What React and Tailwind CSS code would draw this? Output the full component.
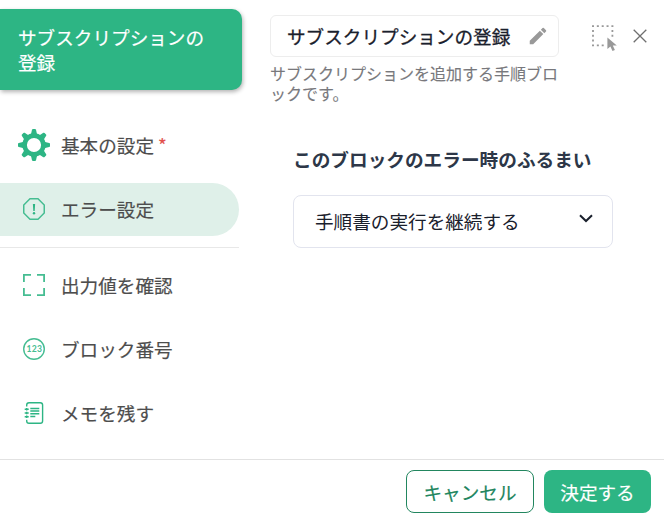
import React, { useState } from 'react';
import clsx from 'clsx';

const GearIcon = () => (
  <svg width="32" height="32" viewBox="0 0 32 32" fill="#2db584">
    {[0, 45, 90, 135, 180, 225, 270, 315].map((angle) => (
      <path key={angle} d="M12.8 6 14 .8Q14.2 0 15 0h2Q17.8 0 18 .8L19.2 6z" transform={`rotate(${angle} 16 16)`} />
    ))}
    <circle cx="16" cy="16" r="9.4" fill="none" stroke="#2db584" strokeWidth="4.6" />
  </svg>
);

const ErrorIcon = () => (
  <svg width="22" height="22" viewBox="0 0 22 22" fill="none" stroke="#46bd92" strokeWidth="1.5">
    <path d="M7 .75h8L21.25 7v8L15 21.25H7L.75 15V7z" />
    <path d="M9.9 6h2.2l-.4 7h-1.4z" fill="#2db584" stroke="none" />
    <circle cx="11" cy="15.2" r="1.2" fill="#2db584" stroke="none" />
  </svg>
);

const OutputIcon = () => (
  <svg width="22" height="22" viewBox="0 0 22 22" fill="none" stroke="#46bd92" strokeWidth="1.8">
    <path d="M.9 8V.9H8M14 .9h7.1V8M21.1 14v7.1H14M8 21.1H.9V14" />
  </svg>
);

const NumberIcon = () => (
  <svg width="22" height="22" viewBox="0 0 22 22">
    <circle cx="11" cy="11" r="10.3" fill="none" stroke="#46bd92" strokeWidth="1.4" />
    <text x="11.3" y="14" textAnchor="middle" className="font-['Lato',sans-serif] text-[8.6px] font-bold tracking-[0.2px] [-webkit-text-stroke:0]" fill="#46bd92">
      123
    </text>
  </svg>
);

const MemoIcon = () => (
  <svg width="22" height="22" viewBox="0 0 22 22" fill="none" stroke="#2db584" strokeWidth="1.4">
    <path d="M3.7 4.5V3Q3.7.7 6 .7h11.3q2.3 0 2.3 2.3v16q0 2.3-2.3 2.3H6Q3.7 21.3 3.7 19v-1.2" />
    <path d="M1.7 7.3h4M1.7 11h4M1.7 14.7h4M3.7 6v2.6M3.7 9.7v2.6M3.7 13.4V16" />
    <path d="M7.3 6.5h9M7.3 9h9M7.3 11.7h9M7.3 14.5h5" />
  </svg>
);

const PencilIcon = () => (
  <svg width="22" height="22" viewBox="0 0 24 24" fill="#999">
    <path d="M3 17.25V21h3.75L17.81 9.94l-3.75-3.75L3 17.25zM20.71 7.04a1 1 0 0 0 0-1.41l-2.34-2.34a1 1 0 0 0-1.41 0l-1.83 1.83 3.75 3.75 1.83-1.83z" />
  </svg>
);

const SelectAreaIcon = () => (
  <svg width="26" height="28" viewBox="0 0 26 28" fill="none" stroke="#999" strokeWidth="1.8">
    <path d="M0 1.2h21.4M0 20.3h14" strokeDasharray="2 2.85" />
    <path d="M1 4.9v14M20.4 4.9v9" strokeDasharray="2 2.75" />
    <path d="M15.4 12.5v11.6l3-2.7 2.1 4.6 2.4-1-2.1-4.4h4z" fill="#999" stroke="none" />
  </svg>
);

const CloseIcon = () => (
  <svg width="14" height="14" viewBox="0 0 14 14" fill="none" stroke="#6f6f6f" strokeWidth="1.3">
    <path d="M.7.7l12.6 12.6M13.3.7.7 13.3" />
  </svg>
);

const ChevronIcon = () => (
  <svg width="14" height="9" viewBox="0 0 14 9" fill="none" stroke="#1a202c" strokeWidth="2">
    <path d="M1 1.2l6 5.8 6-5.8" />
  </svg>
);

const settingTabs = [
  { id: 'basic', label: '基本の設定', icon: GearIcon, required: true },
  { id: 'error', label: 'エラー設定', icon: ErrorIcon },
];

const utilityTabs = [
  { id: 'output', label: '出力値を確認', icon: OutputIcon },
  { id: 'number', label: 'ブロック番号', icon: NumberIcon },
  { id: 'memo', label: 'メモを残す', icon: MemoIcon },
];

const TabButton = ({ tab, active, onSelect }) => {
  const Icon = tab.icon;

  return (
    <button
      onClick={() => onSelect(tab.id)}
      className={clsx('flex h-[53px] w-[239px] items-center rounded-r-full pb-[2px] pl-[18px] text-[#4d4d4d]', active && 'bg-[#dff0e9]')}
    >
      <span className="flex w-8 justify-center">
        <Icon />
      </span>
      <span className="ml-[11px]">{tab.label}</span>
      {tab.required && <span className="ml-1 text-[#e2504c]">*</span>}
    </button>
  );
};

const App = () => {
  const [activeTab, setActiveTab] = useState('error');

  return (
    <div className="flex h-[518px] w-[664px] flex-col overflow-hidden bg-white font-['Noto_Sans_CJK_JP',sans-serif] text-[18.62px] [-webkit-text-stroke:0.18px]">
      <div className="flex h-[459px]">
        {/* Sidebar */}
        <aside className="w-[242px] shrink-0 pt-[9px]">
          <div className="flex h-[81px] items-center rounded-r-[10px] bg-[#2db584] pb-[2px] pl-[18px] pr-8 leading-[25px] text-white shadow-[1px_2px_4px_rgba(0,0,0,0.3)]">
            サブスクリプションの登録
          </div>
          <nav className="mt-[29px] flex flex-col gap-[11px]">
            {settingTabs.map((tab) => (
              <TabButton key={tab.id} tab={tab} active={activeTab === tab.id} onSelect={setActiveTab} />
            ))}
          </nav>
          <nav className="mt-[11px] flex w-[239px] flex-col gap-[11px] border-t border-[#e8e8e8] pt-[11px]">
            {utilityTabs.map((tab) => (
              <TabButton key={tab.id} tab={tab} active={activeTab === tab.id} onSelect={setActiveTab} />
            ))}
          </nav>
        </aside>

        {/* Main panel */}
        <main className="flex-1 pl-7 pt-[15px]">
          <div className="flex items-start">
            <div className="flex h-[42px] w-[289px] items-center justify-between rounded-md border border-[#ededed] pl-4 pr-[9px] text-[#1a202c]">
              <span className="[-webkit-text-stroke:0.28px]">サブスクリプションの登録</span>
              <PencilIcon />
            </div>
            <button className="ml-[33px] mt-[10px]">
              <SelectAreaIcon />
            </button>
            <button className="ml-[15px] mt-[14px]">
              <CloseIcon />
            </button>
          </div>
          <p className="mt-[6px] w-[290px] text-base leading-5 text-[#78787c] [-webkit-text-stroke:0.12px]">
            サブスクリプションを追加する手順ブロックです。
          </p>

          {/* Error behavior */}
          <section className="ml-[23px] mt-[42px]">
            <h2 className="text-[18.66px] font-bold leading-7 text-[#2d3748] [-webkit-text-stroke:0]">このブロックのエラー時のふるまい</h2>
            <button className="mt-[22px] flex h-[53px] w-80 items-center justify-between rounded-lg border border-[#e2e4ee] pb-[2px] pl-[21px] pr-[19px] text-[#1a202c] [-webkit-text-stroke:0]">
              <span>手順書の実行を継続する</span>
              <span className="-mt-1">
                <ChevronIcon />
              </span>
            </button>
          </section>
        </main>
      </div>

      {/* Footer */}
      <footer className="flex h-[59px] justify-end gap-[10px] border-t border-[#e2e2e2] pr-[13px] pt-[10px]">
        <button className="h-[43px] w-32 rounded-lg border border-[#22865f] text-[#22865f]">キャンセル</button>
        <button className="h-[43px] w-[107px] rounded-lg bg-[#2db584] text-white">決定する</button>
      </footer>
    </div>
  );
};

export default App;
